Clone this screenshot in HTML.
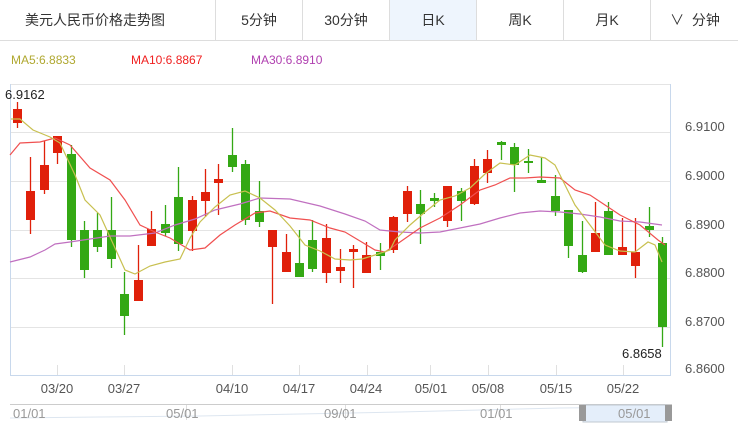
<!DOCTYPE html>
<html><head><meta charset="utf-8"><style>
body{margin:0;width:738px;height:431px;background:#fff;overflow:hidden;font-family:"Liberation Sans","Noto Sans CJK SC",sans-serif}
.hdr{position:absolute;left:0;top:0;width:738px;height:40px;border-bottom:1px solid #ddd}
.t{position:absolute;top:0;height:40px;line-height:40px;font-size:14px;color:#333;text-align:center;border-left:1px solid #ddd}
</style></head><body>
<div class="hdr">
<div style="position:absolute;left:25px;top:0;line-height:40px;font-size:14px;color:#333">美元人民币价格走势图</div>
<div class="t" style="left:215px;width:86px">5分钟</div>
<div class="t" style="left:302px;width:86px">30分钟</div>
<div class="t" style="left:389px;width:86px;background:#eef5fd">日K</div>
<div class="t" style="left:476px;width:86px">周K</div>
<div class="t" style="left:563px;width:86px">月K</div>
<div class="t" style="left:650px;width:88px">&#8744;&nbsp; 分钟</div>
</div>
<svg width="738" height="431" style="position:absolute;left:0;top:0" font-family="Liberation Sans, sans-serif" font-size="12">
<text x="11" y="64" fill="#b0a830">MA5:6.8833</text>
<text x="131" y="64" fill="#f02020">MA10:6.8867</text>
<text x="251" y="64" fill="#b040b0">MA30:6.8910</text>
<g stroke="#e4e4e4" stroke-width="1">
<line x1="10" y1="84.5" x2="670" y2="84.5"/>
<line x1="10" y1="132.5" x2="670" y2="132.5"/>
<line x1="10" y1="181.5" x2="670" y2="181.5"/>
<line x1="10" y1="230.5" x2="670" y2="230.5"/>
<line x1="10" y1="278.5" x2="670" y2="278.5"/>
<line x1="10" y1="327.5" x2="670" y2="327.5"/>
</g>
<line x1="10.5" y1="84" x2="10.5" y2="376" stroke="#c8d8ec"/>
<line x1="670.5" y1="84" x2="670.5" y2="376" stroke="#c8d8ec"/>
<line x1="10" y1="375.5" x2="671" y2="375.5" stroke="#c8d8ec"/>
<g stroke="#e0e0e0"><line x1="57.5" y1="365" x2="57.5" y2="375"/><line x1="124.5" y1="365" x2="124.5" y2="375"/><line x1="232.5" y1="365" x2="232.5" y2="375"/><line x1="299.5" y1="365" x2="299.5" y2="375"/><line x1="367.5" y1="365" x2="367.5" y2="375"/><line x1="430.5" y1="365" x2="430.5" y2="375"/><line x1="488.5" y1="365" x2="488.5" y2="375"/><line x1="556.5" y1="365" x2="556.5" y2="375"/><line x1="623.5" y1="365" x2="623.5" y2="375"/></g>
<g fill="#555" font-size="13">
<text x="685" y="131">6.9100</text><text x="685" y="180">6.9000</text><text x="685" y="229">6.8900</text><text x="685" y="277">6.8800</text><text x="685" y="326">6.8700</text><text x="685" y="373">6.8600</text>
</g>
<g fill="#555" font-size="13" text-anchor="middle">
<text x="57" y="393">03/20</text><text x="124" y="393">03/27</text><text x="232" y="393">04/10</text><text x="299" y="393">04/17</text><text x="366" y="393">04/24</text><text x="431" y="393">05/01</text><text x="488" y="393">05/08</text><text x="556" y="393">05/15</text><text x="623" y="393">05/22</text>
</g>
<text x="5" y="99" font-size="13" fill="#222">6.9162</text>
<text x="622" y="358" font-size="13" fill="#222">6.8658</text>
<g id="c"></g>
<polyline fill="none" stroke="#c070c0" stroke-width="1.2" points="10,262 30,257 45,250 55,244 70,242 90,239 110,236 130,236 155,233 175,225 195,219 215,210 240,204 260,198 290,199 320,206 345,214 365,221 380,230 400,232 420,233 440,232 460,228 480,224 500,218 520,213 540,211 560,212 580,214 600,217 620,221 640,222 662,225"/>
<polyline fill="none" stroke="#f05050" stroke-width="1.2" points="10,155 20,143 40,142 55,138 70,145 90,168 110,180 125,200 140,225 155,232 170,238 190,250 205,248 220,235 235,225 255,213 270,211 290,218 310,220 330,228 345,232 360,241 375,250 385,252 400,242 420,228 440,218 460,205 480,190 495,185 510,178 525,178 540,177 560,178 575,190 590,195 605,205 620,215 640,225 658,240 665,245"/>
<polyline fill="none" stroke="#c8c050" stroke-width="1.2" points="11,119 20,119 33,130 50,137 60,143 75,175 85,200 100,215 110,237 125,270 135,274 150,266 165,262 180,259 190,238 200,222 215,207 230,195 245,191 260,198 275,210 290,226 305,245 320,251 335,259 350,260 362,259 375,255 390,250 395,240 410,225 425,212 440,200 455,196 470,188 485,174 500,163 515,165 530,155 545,158 555,165 565,185 575,205 590,225 605,245 620,251 635,252 648,242 655,245 662,262"/>
<line x1="10" y1="404.5" x2="672" y2="404.5" stroke="#ccc"/>
<polyline fill="none" stroke="#dde6f0" points="10,418 100,417 200,416 300,414 400,412 480,410 560,408 670,407"/>
<rect x="583" y="405" width="84" height="17" fill="#e4eefa" stroke="#c0c8d0"/>
<rect x="579" y="405" width="7" height="16" fill="#999"/>
<rect x="665" y="405" width="7" height="16" fill="#999"/>
<g stroke="#ddd"><line x1="186.5" y1="405" x2="186.5" y2="420"/><line x1="345.5" y1="405" x2="345.5" y2="420"/><line x1="500.5" y1="405" x2="500.5" y2="420"/></g>
<g fill="#999" font-size="13"><text x="13" y="418">01/01</text><text x="166" y="418">05/01</text><text x="324" y="418">09/01</text><text x="480" y="418">01/01</text><text x="618" y="418">05/01</text></g>
</svg>
<script>
var d=[[13,'r',109,123,102,128],[26,'r',191,220,157,234],[40,'r',165,190,141,194],[53,'r',136,153,136,164],[67,'g',154,240,145,247],[80,'g',230,270,221,278],[93,'g',230,247,213,252],[107,'g',230,259,197,268],[120,'g',294,316,272,335],[134,'r',280,301,245,301],[147,'r',229,246,211,246],[161,'g',224,233,205,236],[174,'g',197,244,167,251],[188,'r',200,231,196,251],[201,'r',192,201,169,217],[214,'r',179,183,164,215],[228,'g',155,167,128,172],[241,'g',164,220,160,225],[255,'g',211,222,181,227],[268,'r',230,247,230,304],[282,'r',252,272,234,272],[295,'g',263,277,230,277],[308,'g',240,269,220,272],[322,'r',238,273,224,283],[336,'r',267,271,249,283],[349,'r',249,252,245,288],[362,'r',255,273,242,273],[376,'g',252,256,243,270],[389,'r',217,250,216,253],[403,'r',191,214,186,222],[416,'g',204,214,190,244],[430,'g',198,201,193,207],[443,'r',186,221,186,227],[457,'g',191,201,188,221],[470,'r',166,204,159,205],[483,'r',159,173,150,183],[497,'g',142,145,141,160],[510,'g',147,165,143,192],[524,'g',161,163,149,173],[537,'g',180,183,157,183],[551,'g',196,211,175,216],[564,'g',210,246,210,258],[578,'g',255,272,221,273],[591,'r',233,252,202,252],[604,'g',211,255,202,255],[618,'r',247,255,218,255],[631,'r',252,266,218,278],[645,'g',226,230,207,237],[658,'g',243,327,237,347]];
var s='';d.forEach(function(c){var col=c[1]=='r'?'#e0200a':'#34a814';s+='<line x1="'+(c[0]+4.5)+'" y1="'+c[4]+'" x2="'+(c[0]+4.5)+'" y2="'+c[5]+'" stroke="'+col+'" stroke-width="1.3"/><rect x="'+c[0]+'" y="'+c[2]+'" width="9" height="'+Math.max(2,c[3]-c[2])+'" fill="'+col+'"/>';});
document.getElementById('c').innerHTML=s;
</script>
</body></html>
